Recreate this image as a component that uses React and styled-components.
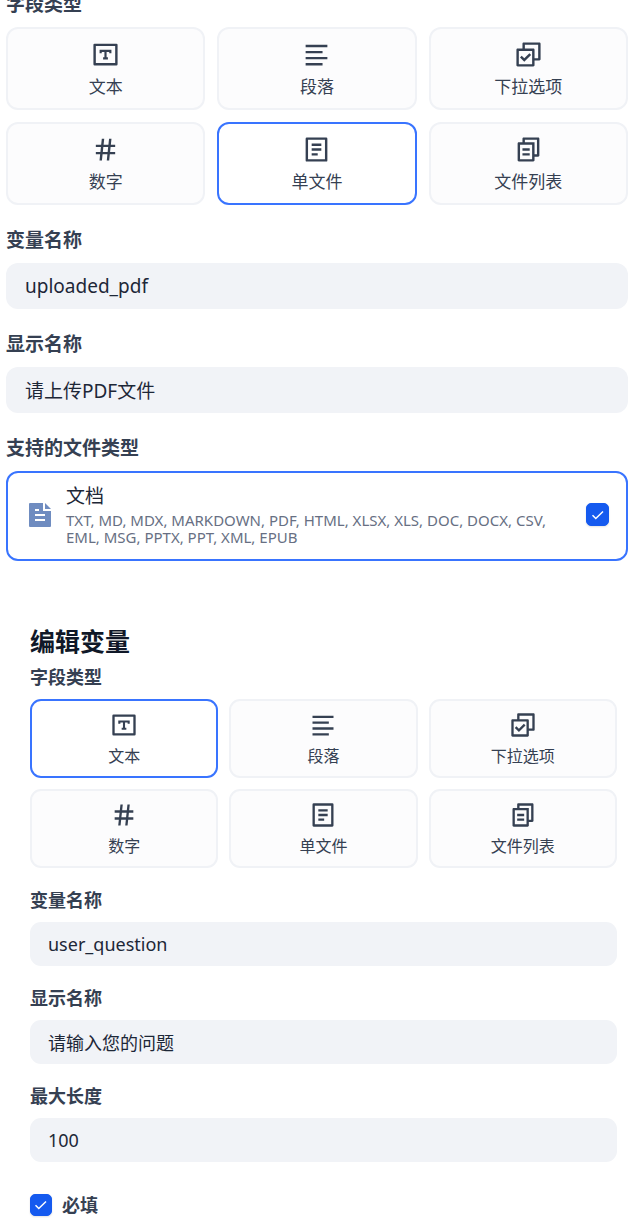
import React, { useState } from 'react';
import styled, { createGlobalStyle, ThemeProvider } from 'styled-components';
import {
  RiAlignLeft,
  RiCheckboxMultipleLine,
  RiFileCopy2Line,
  RiHashtag,
} from 'react-icons/ri';

const GlobalStyle = createGlobalStyle`
  * { box-sizing: border-box; }
  body {
    margin: 0;
    background: #ffffff;
    font-family: "Noto Sans", "Noto Sans CJK SC", sans-serif;
  }
  button, input { font-family: inherit; }
`;

const wide = {
  icon: 29, tile: 83, tileTop: 4, tileGap: 4, gap: 12, label: 19, tileText: 17, input: 46, inputText: 19, inputPad: 19, labelLine: 46, radius: 12, fieldGap: 12,
};
const compact = {
  icon: 28, tile: 79, tileTop: 3, tileGap: 3, gap: 11, label: 18, tileText: 16, input: 44, inputText: 18, inputPad: 18, labelLine: 44, radius: 11, fieldGap: 10,
};

const Page = styled.main`
  display: flex;
  flex-direction: column;
  gap: 66px;
  overflow: hidden;
`;

const Panel = styled.form`
  display: flex;
  flex-direction: column;
  margin-top: ${(p) => (p.$scrolled ? '-19px' : '0')};
  padding: ${(p) => (p.$inset ? '0 13px 0 30px' : '0 2px 0 6px')};
`;

const FieldSet = styled.fieldset`
  border: 0;
  margin: 0;
  padding: 0;
  min-width: 0;
`;

const Caption = styled.legend`
  padding: 0;
  line-height: ${(p) => p.theme.labelLine}px;
  font-size: ${(p) => p.theme.label}px;
  font-weight: 700;
  color: #354052;
`;

const TypeGrid = styled.div`
  display: grid;
  grid-template-columns: repeat(3, 1fr);
  gap: ${(p) => p.theme.gap}px;
`;

const TypeTile = styled.button`
  height: ${(p) => p.theme.tile}px;
  padding: ${(p) => p.theme.tileTop}px 0 0;
  display: flex;
  flex-direction: column;
  align-items: center;
  justify-content: center;
  gap: ${(p) => p.theme.tileGap}px;
  border: 2px solid ${(p) => (p.$active ? '#3974ff' : '#f0f2f6')};
  border-radius: ${(p) => p.theme.radius}px;
  background: ${(p) => (p.$active ? '#ffffff' : '#fcfcfd')};
  color: #354052;
  font-size: ${(p) => p.theme.tileText}px;
  line-height: 28px;
  cursor: pointer;

  svg { display: block; flex: none; }
`;

const Field = styled.div`
  display: flex;
  flex-direction: column;
  margin-top: ${(p) => p.theme.fieldGap}px;
`;

const FieldLabel = styled.label`
  line-height: ${(p) => p.theme.labelLine}px;
  font-size: ${(p) => p.theme.label}px;
  font-weight: 700;
  color: #354052;
`;

const TextInput = styled.input`
  width: 100%;
  height: ${(p) => p.theme.input}px;
  padding: 0 ${(p) => p.theme.inputPad}px;
  border: 0;
  border-radius: ${(p) => p.theme.radius}px;
  background: #f1f3f7;
  color: #1d2737;
  font-size: ${(p) => p.theme.inputText}px;
`;

const FileCard = styled.label`
  display: flex;
  align-items: center;
  min-height: 90px;
  padding: 0 17px 3px 18px;
  border: 2px solid #3974ff;
  border-radius: 12px;
  cursor: pointer;

  > svg { flex: none; }
`;

const FileText = styled.span`
  flex: 1;
  min-width: 0;
  margin: 0 32px 0 12px;
`;

const FileName = styled.span`
  display: block;
  margin-bottom: 3px;
  font-size: 19px;
  line-height: 26px;
  color: #1d2737;
`;

const FileFormats = styled.span`
  display: block;
  font-size: 15px;
  line-height: 17px;
  color: #676f83;
`;

const CheckWrap = styled.span`
  display: grid;
  flex: none;

  > * { grid-area: 1 / 1; }
  svg { pointer-events: none; place-self: center; }
`;

const CheckInput = styled.input`
  appearance: none;
  width: ${(p) => p.$size}px;
  height: ${(p) => p.$size}px;
  margin: 0;
  border-radius: 5px;
  border: 1px solid #155aef;
  background: ${(p) => (p.checked ? '#155aef' : '#ffffff')};
  box-shadow: 0 1px 2px #10182820;
  cursor: pointer;
`;

const Title = styled.h2`
  margin: 0;
  font-size: 25px;
  line-height: 28px;
  font-weight: 700;
  color: #101828;
`;

const RequiredRow = styled.label`
  display: flex;
  align-items: center;
  gap: 10px;
  margin-top: 25px;
  line-height: 36px;
  font-size: 18px;
  font-weight: 700;
  color: #354052;
`;

function TextBoxIcon({ size }) {
  return (
    <svg width={size} height={size} viewBox="0 0 24 24" fill="none" stroke="currentColor" strokeWidth="2">
      <rect x="3" y="4" width="18" height="16" strokeLinejoin="round" />
      <path d="M8 11V9h8v2M12 9v6M10 15.2h4" strokeWidth="1.8" />
    </svg>
  );
}

function SingleFileIcon({ size }) {
  return (
    <svg width={size} height={size} viewBox="0 0 24 24" fill="none" stroke="currentColor" strokeWidth="2">
      <rect x="4" y="3" width="16" height="18" strokeLinejoin="round" />
      <path d="M8 8h8M8 12h8M8 16h5" />
    </svg>
  );
}

function DocumentIcon() {
  return (
    <svg width="28" height="28" viewBox="0 0 28 28">
      <path d="M4 2h13v8h8v15a1 1 0 0 1-1 1H4a1 1 0 0 1-1-1V3a1 1 0 0 1 1-1Z" fill="#6f8cc0" />
      <path d="m19 2 6 6h-6Z" fill="#6f8cc0" />
      <path d="M9 9h4M9 14h10M9 19h10" stroke="#fff" strokeWidth="2" />
    </svg>
  );
}

function Check({ size = 23, checked, onChange }) {
  return (
    <CheckWrap>
      <CheckInput $size={size} type="checkbox" checked={checked} onChange={onChange} />
      <svg width="14" height="14" viewBox="0 0 14 14" fill="none" stroke="#fff" strokeWidth="1.5">
        <path d="m1.5 7.2 3.3 3.3 7.2-7" />
      </svg>
    </CheckWrap>
  );
}

const TYPES = [
  ['文本', TextBoxIcon],
  ['段落', RiAlignLeft],
  ['下拉选项', RiCheckboxMultipleLine],
  ['数字', RiHashtag],
  ['单文件', SingleFileIcon],
  ['文件列表', RiFileCopy2Line],
];

function TypePicker({ initial, iconSize }) {
  const [selected, setSelected] = useState(initial);
  return (
    <FieldSet>
      <Caption>字段类型</Caption>
      <TypeGrid>
        {TYPES.map(([name, Icon]) => (
          <TypeTile
            key={name}
            type="button"
            $active={name === selected}
            aria-pressed={name === selected}
            onClick={() => setSelected(name)}
          >
            <Icon size={iconSize} />
            {name}
          </TypeTile>
        ))}
      </TypeGrid>
    </FieldSet>
  );
}

function TextField({ id, label, value }) {
  return (
    <Field>
      <FieldLabel htmlFor={id}>{label}</FieldLabel>
      <TextInput id={id} defaultValue={value} />
    </Field>
  );
}

export default function App() {
  const [docs, setDocs] = useState(true);
  const [required, setRequired] = useState(true);
  return (
    <Page>
      <GlobalStyle />
      <ThemeProvider theme={wide}>
        <Panel $scrolled>
          <TypePicker initial="单文件" iconSize={wide.icon} />
          <TextField id="file-var" label="变量名称" value="uploaded_pdf" />
          <TextField id="file-name" label="显示名称" value="请上传PDF文件" />
          <Field>
            <FieldLabel as="span">支持的文件类型</FieldLabel>
            <FileCard>
              <DocumentIcon />
              <FileText>
                <FileName>文档</FileName>
                <FileFormats>
                  TXT, MD, MDX, MARKDOWN, PDF, HTML, XLSX, XLS, DOC, DOCX, CSV, EML, MSG, PPTX, PPT, XML, EPUB
                </FileFormats>
              </FileText>
              <Check checked={docs} onChange={() => setDocs(!docs)} />
            </FileCard>
          </Field>
        </Panel>
      </ThemeProvider>
      <ThemeProvider theme={compact}>
        <Panel $inset>
          <Title>编辑变量</Title>
          <TypePicker initial="文本" iconSize={compact.icon} />
          <TextField id="text-var" label="变量名称" value="user_question" />
          <TextField id="text-name" label="显示名称" value="请输入您的问题" />
          <TextField id="text-max" label="最大长度" value="100" />
          <RequiredRow>
            <Check size={22} checked={required} onChange={() => setRequired(!required)} />
            必填
          </RequiredRow>
        </Panel>
      </ThemeProvider>
    </Page>
  );
}
